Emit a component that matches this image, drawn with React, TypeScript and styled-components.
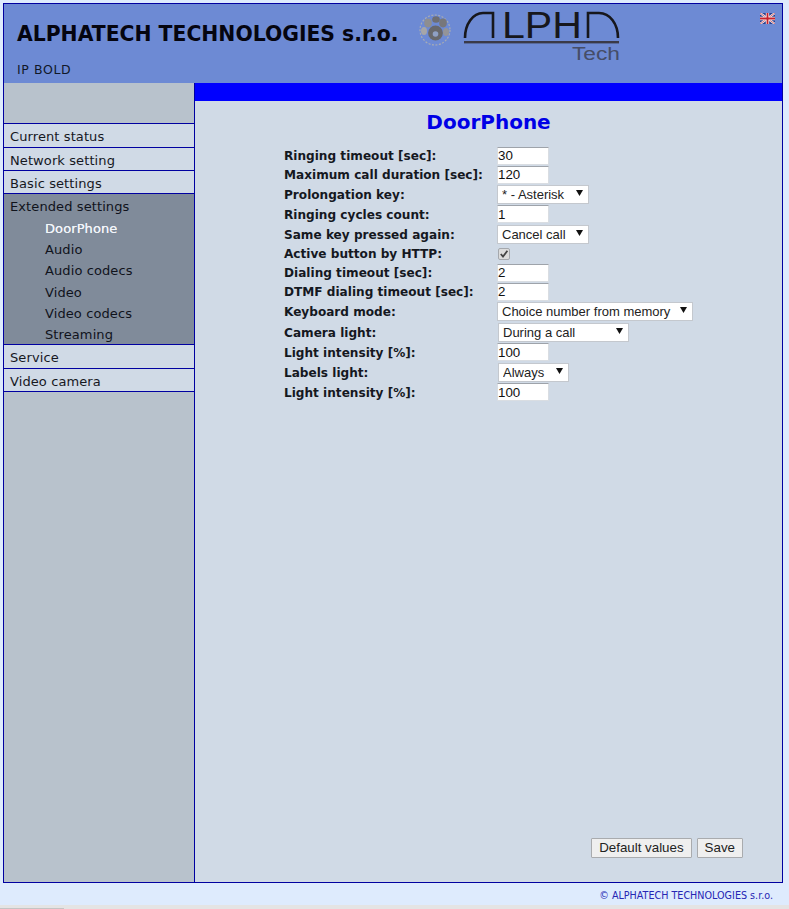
import React from "react"
import styled, { createGlobalStyle } from "styled-components"

const Global = createGlobalStyle`
html, body { margin: 0; padding: 0; background: #deebfd; overflow: hidden; }
body { font-family: "DejaVu Sans", Verdana, sans-serif; color: #111; }
`

const Page = styled.div`
width: 789px;
height: 909px;
display: flex;
flex-direction: column;
`

const Frame = styled.div`
margin: 3px 6px 0 3px;
width: 778px;
height: 878px;
border: 1px solid #0000a0;
display: flex;
flex-direction: column;
`

const Header = styled.header`
height: 79px;
background: #6d8ad4;
display: flex;
position: relative;
`

const Brand = styled.div`
width: 400px;
padding: 19px 0 0 13px;
box-sizing: border-box;
`

const CompanyName = styled.h1`
margin: 0;
font-size: 20.35px;
line-height: 22px;
font-weight: 700;
color: #050510;
white-space: nowrap;
`

const Model = styled.div`
margin-top: 17px;
font-size: 12.5px;
line-height: 15px;
letter-spacing: 0.6px;
color: #101828;
`

const LogoWrap = styled.div`
position: absolute;
left: 412px;
top: 0;
line-height: 0;
`

const FlagWrap = styled.div`
position: absolute;
right: 7px;
top: 9px;
line-height: 0;
`

const Body = styled.div`
flex: 1;
display: flex;
min-height: 0;
`

const Sidebar = styled.nav`
width: 190px;
background: #b8c2cc;
border-right: 1px solid #0000a0;
padding-top: 40px;
`

const Item = styled.div<{ $h: number; $first?: boolean }>`
height: ${p => p.$h}px;
box-sizing: border-box;
background: #d0dae6;
border-bottom: 1px solid #0000a0;
border-top: ${p => (p.$first ? "1px solid #0000a0" : "none")};
padding-left: 6px;
font-size: 13px;
line-height: ${p => (p.$first ? p.$h + 1 : p.$h + 2)}px;
letter-spacing: 0.1px;
color: #16181f;
white-space: nowrap;
`

const Group = styled.div`
height: 151px;
box-sizing: border-box;
background: #808b9a;
border-bottom: 1px solid #0000a0;
padding: 3px 0 0 6px;
font-size: 13px;
color: #10131c;
`

const GroupTitle = styled.div`
height: 21px;
line-height: 19px;
letter-spacing: 0.1px;
`

const SubItem = styled.div<{ $active?: boolean }>`
height: 21.2px;
line-height: 21px;
padding-left: 35px;
letter-spacing: 0.1px;
color: ${p => (p.$active ? "#f2f5fa" : "#10131c")};
text-shadow: ${p => (p.$active ? "0 0 0.6px #f2f5fa" : "none")};
`

const Content = styled.main`
flex: 1;
min-width: 0;
background: #d0dae6;
display: flex;
flex-direction: column;
`

const BlueBar = styled.div`
height: 18px;
background: #0000ff;
`

const Title = styled.h2`
margin: 9px 0 0;
height: 24px;
text-align: center;
font-size: 20px;
line-height: 24px;
font-weight: 700;
color: #0000e6;
`

const Form = styled.div`
margin: 12px 0 0 89px;
display: grid;
grid-template-columns: 213px auto;
grid-auto-rows: min-content;
justify-content: start;
`

const Label = styled.div<{ $h: number }>`
height: ${p => p.$h}px;
box-sizing: border-box;
padding-top: 1px;
line-height: ${p => p.$h}px;
font-size: 12.1px;
font-weight: 700;
color: #15181f;
white-space: nowrap;
`

const Cell = styled.div`
display: flex;
align-items: center;
`

const TextInput = styled.input`
width: 52px;
height: 18px;
box-sizing: border-box;
padding: 0;
border: 1px solid #d9dde2;
border-top-color: #9ea3aa;
background: #fff;
font-family: "Liberation Sans", Arial, sans-serif;
font-size: 13.33px;
color: #111;
outline: none;
`

const SelectWrap = styled.div<{ $w: number; $x?: number }>`
position: relative;
align-self: flex-start;
width: ${p => p.$w}px;
height: 19px;
margin-left: ${p => p.$x ?? 0}px;
`

const Select = styled.select`
appearance: none;
width: 100%;
height: 100%;
box-sizing: border-box;
padding: 0 0 0 4px;
border: 1px solid #c4c8ce;
border-radius: 0;
background: #fff;
font-family: "Liberation Sans", Arial, sans-serif;
font-size: 13px;
color: #222;
outline: none;
`

const Arrow = styled.svg`
position: absolute;
right: 6px;
top: 6px;
`

const CheckBox = styled.span`
width: 12px;
height: 12px;
box-sizing: border-box;
margin-left: 1px;
border: 1px solid #a5a8ad;
border-radius: 2px;
background: #dcdcdc;
display: inline-flex;
`

const Buttons = styled.div`
margin-top: auto;
padding: 0 39px 24px 0;
display: flex;
justify-content: flex-end;
gap: 5px;
`

const Button = styled.button`
height: 20px;
box-sizing: border-box;
padding: 0 7px;
border: 1px solid #a9abae;
border-radius: 1px;
background: #efefef;
font-family: "Liberation Sans", Arial, sans-serif;
font-size: 13.33px;
line-height: 18px;
color: #222;
`

const Footer = styled.footer`
height: 22px;
padding-right: 16px;
text-align: right;
font-size: 9.6px;
line-height: 26px;
color: #2626b4;
`

const Scrollbar = styled.div`
margin-top: auto;
height: 4px;
background: #e4e4e4;
position: relative;
`

const ScrollThumb = styled.div`
position: absolute;
left: 0;
bottom: 0;
width: 64px;
height: 1px;
background: #c4c4c4;
`

const Logo = () => (
    <svg width="210" height="62" viewBox="0 -6 210 62">
        {/* paw mark */}
        <circle cx="19" cy="20" r="15" fill="none" stroke="#a8acb4" strokeWidth="1.2" strokeDasharray="2 1.5" />
        <ellipse cx="12" cy="13" rx="3.8" ry="4.4" fill="#8e8e90" />
        <ellipse cx="20" cy="9.5" rx="3.8" ry="3.2" fill="#6e6e72" />
        <ellipse cx="27" cy="13" rx="3.8" ry="4.4" fill="#77777b" />
        <ellipse cx="8" cy="21" rx="3" ry="4" fill="#a6a6a8" />
        <ellipse cx="30" cy="22" rx="3" ry="4" fill="#949498" />
        <ellipse cx="19.5" cy="23" rx="7.4" ry="7.6" fill="#68686c" />
        <circle cx="19.5" cy="24" r="2.8" fill="#8fa0c4" />
        {/* arches of the lettering */}
        <path d="M49 28 C49 14 57 3 67 3 H77 V28" fill="none" stroke="#17171c" strokeWidth="2.6" />
        <path d="M172 28 V3 H183 C194 3 202 14 202 28" fill="none" stroke="#17171c" strokeWidth="2.6" />
        <text x="86" y="28" textLength="80" lengthAdjust="spacingAndGlyphs" fontFamily="Liberation Sans, Arial, sans-serif" fontSize="36" fill="#17171c">LPH</text>
        <rect x="48" y="31" width="155" height="2.4" fill="#3a3a48" />
        <text x="156" y="50" textLength="48" lengthAdjust="spacingAndGlyphs" fontFamily="Liberation Sans, Arial, sans-serif" fontSize="18" fill="#454d68">Tech</text>
    </svg>
)

const Flag = () => (
    <svg width="15" height="11" viewBox="0 0 15 11">
        <rect width="15" height="11" fill="#2a3f8f" />
        <path d="M0 0 L15 11 M15 0 L0 11" stroke="#f4f4f4" strokeWidth="2.2" />
        <path d="M0 0 L15 11 M15 0 L0 11" stroke="#c8303c" strokeWidth="0.7" />
        <path d="M7.5 0 V11 M0 5.5 H15" stroke="#f4f4f4" strokeWidth="3.4" />
        <path d="M7.5 0 V11 M0 5.5 H15" stroke="#c8202c" strokeWidth="1.8" />
    </svg>
)

type Row =
    | { label: string; h: number; kind: "input"; value: string }
    | { label: string; h: number; kind: "select"; value: string; w: number; x?: number }
    | { label: string; h: number; kind: "check" }

const rows: Row[] = [
    { label: "Ringing timeout [sec]:", h: 19, kind: "input", value: "30" },
    { label: "Maximum call duration [sec]:", h: 19, kind: "input", value: "120" },
    { label: "Prolongation key:", h: 20, kind: "select", value: "* - Asterisk", w: 92 },
    { label: "Ringing cycles count:", h: 20, kind: "input", value: "1" },
    { label: "Same key pressed again:", h: 20, kind: "select", value: "Cancel call", w: 92 },
    { label: "Active button by HTTP:", h: 19, kind: "check" },
    { label: "Dialing timeout [sec]:", h: 19, kind: "input", value: "2" },
    { label: "DTMF dialing timeout [sec]:", h: 19, kind: "input", value: "2" },
    { label: "Keyboard mode:", h: 21, kind: "select", value: "Choice number from memory", w: 196 },
    { label: "Camera light:", h: 20, kind: "select", value: "During a call", w: 131, x: 1 },
    { label: "Light intensity [%]:", h: 20, kind: "input", value: "100" },
    { label: "Labels light:", h: 20, kind: "select", value: "Always", w: 71, x: 1 },
    { label: "Light intensity [%]:", h: 20, kind: "input", value: "100" },
]

const subItems = ["DoorPhone", "Audio", "Audio codecs", "Video", "Video codecs", "Streaming"]

const Field = ({ row }: { row: Row }) => {
    if (row.kind === "input") return <TextInput defaultValue={row.value} />
    if (row.kind === "check") {
        return (
            <CheckBox>
                <svg width="10" height="10" viewBox="0 0 10 10">
                    <path d="M1.8 5 L4 7.6 L8.4 1.8" fill="none" stroke="#444" strokeWidth="1.8" />
                </svg>
            </CheckBox>
        )
    }
    return (
        <SelectWrap $w={row.w} $x={row.x}>
            <Select defaultValue={row.value}>
                <option>{row.value}</option>
            </Select>
            <Arrow width="7" height="6" viewBox="0 0 7 6">
                <path d="M0 0 H7 L3.5 6 Z" fill="#111" />
            </Arrow>
        </SelectWrap>
    )
}

export default function App() {
    return (
        <Page>
            <Global />
            <Frame>
                <Header>
                    <Brand>
                        <CompanyName>ALPHATECH TECHNOLOGIES s.r.o.</CompanyName>
                        <Model>IP BOLD</Model>
                    </Brand>
                    <LogoWrap><Logo /></LogoWrap>
                    <FlagWrap><Flag /></FlagWrap>
                </Header>
                <Body>
                    <Sidebar>
                        <Item $h={25} $first>Current status</Item>
                        <Item $h={23}>Network setting</Item>
                        <Item $h={23}>Basic settings</Item>
                        <Group>
                            <GroupTitle>Extended settings</GroupTitle>
                            {subItems.map((s, idx) => <SubItem key={s} $active={idx === 0}>{s}</SubItem>)}
                        </Group>
                        <Item $h={24}>Service</Item>
                        <Item $h={23}>Video camera</Item>
                    </Sidebar>
                    <Content>
                        <BlueBar />
                        <Title>DoorPhone</Title>
                        <Form>
                            {rows.map((row, idx) => [
                                <Label key={`l-${idx}`} $h={row.h}>{row.label}</Label>,
                                <Cell key={`c-${idx}`}><Field row={row} /></Cell>,
                            ])}
                        </Form>
                        <Buttons>
                            <Button>Default values</Button>
                            <Button>Save</Button>
                        </Buttons>
                    </Content>
                </Body>
            </Frame>
            <Footer>© ALPHATECH TECHNOLOGIES s.r.o.</Footer>
            <Scrollbar><ScrollThumb /></Scrollbar>
        </Page>
    )
}
